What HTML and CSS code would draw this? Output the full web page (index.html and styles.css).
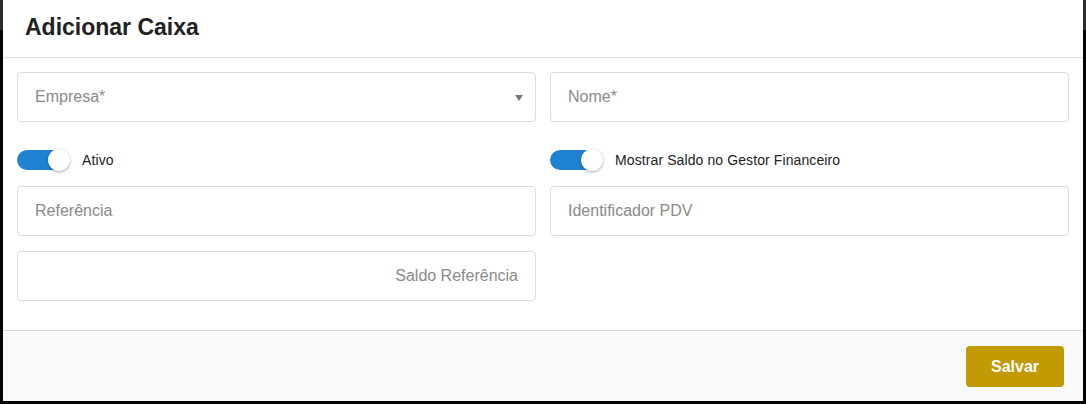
FILE: index.html
```html
<!DOCTYPE html>
<html lang="pt">
<head>
<meta charset="utf-8">
<title>Adicionar Caixa</title>
<link rel="stylesheet" href="styles.css">
</head>
<body>
<div class="modal">
  <div class="modal-header">
    <h1 class="modal-title">Adicionar Caixa</h1>
  </div>
  <div class="modal-body">
    <div class="row">
      <div class="field select">
        <span class="placeholder">Empresa*</span>
        <span class="caret"></span>
      </div>
      <div class="field"><span class="placeholder">Nome*</span></div>
    </div>
    <div class="row toggles">
      <label class="switch"><span class="track"><span class="knob"></span></span><span class="switch-label">Ativo</span></label>
      <label class="switch"><span class="track"><span class="knob"></span></span><span class="switch-label">Mostrar Saldo no Gestor Financeiro</span></label>
    </div>
    <div class="row">
      <div class="field"><span class="placeholder">Referência</span></div>
      <div class="field"><span class="placeholder">Identificador PDV</span></div>
    </div>
    <div class="row">
      <div class="field right"><span class="placeholder">Saldo Referência</span></div>
      <div></div>
    </div>
  </div>
  <div class="modal-footer">
    <button class="btn-save" type="button">Salvar</button>
  </div>
</div>
</body>
</html>
```
FILE: styles.css
```css
* { box-sizing: border-box; }
html, body { margin: 0; padding: 0; }
body {
  width: 1086px;
  height: 404px;
  background: linear-gradient(to bottom, #2c2c2c 0, #2c2c2c 30px, #000 30px);
  font-family: "Liberation Sans", Arial, sans-serif;
  overflow: hidden;
}
.modal {
  margin: 0 3px;
  width: 1080px;
  height: 401px;
  background: #fff;
  display: flex;
  flex-direction: column;
}
.modal-header {
  height: 58px;
  border-bottom: 1px solid #dedede;
  padding: 0 22px;
  display: flex;
  align-items: center;
}
.modal-title {
  margin: 0;
  font-size: 23px;
  font-weight: 700;
  color: #212121;
  padding-bottom: 2px;
}
.modal-body {
  padding: 14px 14px 29px 14px;
  flex: 1;
}
.row {
  display: grid;
  grid-template-columns: 1fr 1fr;
  column-gap: 14px;
  margin-bottom: 15px;
}
.row:last-child { margin-bottom: 0; }
.field {
  height: 50px;
  border: 1px solid #dcdcdc;
  border-radius: 4px;
  display: flex;
  align-items: center;
  padding: 0 17px;
  position: relative;
}
.field.right { justify-content: flex-end; }
.placeholder {
  font-size: 16px;
  color: #8a8a8a;
}
.caret {
  position: absolute;
  right: 12px;
  top: 22px;
  width: 0;
  height: 0;
  border-left: 4px solid transparent;
  border-right: 4px solid transparent;
  border-top: 6px solid #777;
}
.toggles {
  margin-top: 27px;
  height: 22px;
}
.switch {
  display: flex;
  align-items: center;
}
.track {
  position: relative;
  width: 50px;
  height: 20px;
  border-radius: 10px;
  background: #1f82d3;
  margin-right: 15px;
}
.knob {
  position: absolute;
  right: -3px;
  top: -1px;
  width: 22px;
  height: 22px;
  border-radius: 50%;
  background: #fff;
  box-shadow: 0 1px 3px rgba(0,0,0,0.35);
}
.switch-label {
  font-size: 14px;
  color: #222;
  letter-spacing: 0.1px;
}
.modal-footer {
  height: 71px;
  border-top: 1px solid #d6d6d6;
  background: #f8f9fb;
  display: flex;
  justify-content: flex-end;
  align-items: flex-start;
  padding: 15px 19px 0 0;
}
.btn-save {
  width: 98px;
  height: 41px;
  border: none;
  border-radius: 4px;
  background: #c29a04;
  color: #fff;
  font-family: "Liberation Sans", Arial, sans-serif;
  font-size: 16px;
  font-weight: 700;
}
```
